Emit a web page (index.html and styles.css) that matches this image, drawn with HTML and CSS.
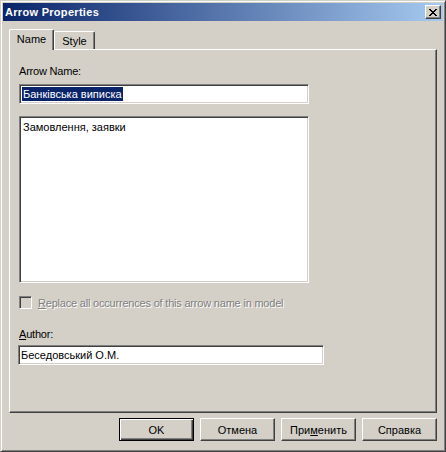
FILE: index.html
```html
<!DOCTYPE html>
<html lang="uk">
<head>
  <meta charset="UTF-8" />
  <title>Arrow Properties</title>
  <link rel="stylesheet" href="styles.css">
</head>
<body>
  <div class="window">
    <div class="titlebar">
      <span class="title">Arrow Properties</span>
      <button class="close-btn" type="button">
        <svg width="8" height="7" viewBox="0 0 8 7" shape-rendering="crispEdges">
          <path fill="#000" d="M0 0h2v1h1v1h2V1h1V0h2v1H7v1H6v1H5v1h1v1h1v1h1v1H6V6H5V5H3v1H2v1H0V6h1V5h1V4h1V3H2V2H1V1H0z"/>
        </svg>
      </button>
    </div>
    <div class="client">
      <div class="tabs">
        <div class="tab active">Name</div>
        <div class="tab">Style</div>
      </div>
      <div class="panel">
        <div class="label">Arrow Name:</div>
        <div class="field name-field"><span class="selected">Банківська виписка</span></div>
        <div class="field memo">Замовлення, заявки</div>
        <div class="check-row">
          <span class="checkbox"></span>
          <span class="check-label"><u>R</u>eplace all occurrences of this arrow name in model</span>
        </div>
        <div class="label author-label"><u>A</u>uthor:</div>
        <div class="field author-field">Беседовський О.М.</div>
      </div>
      <div class="buttons">
        <button class="btn default" type="button">OK</button>
        <button class="btn" type="button">Отмена</button>
        <button class="btn" type="button">При<u>м</u>енить</button>
        <button class="btn" type="button">Справка</button>
      </div>
    </div>
  </div>
</body>
</html>
```

FILE: styles.css
```css
* {
  box-sizing: border-box;
}
body {
  margin: 0;
  background: #d4d0c8;
  font-family: "Liberation Sans", Arial, sans-serif;
  font-size: 11px;
  color: #000;
}
.window {
  width: 446px;
  height: 452px;
  padding: 2px;
  background: #d4d0c8;
  border: 1px solid;
  border-color: #d4d0c8 #404040 #404040 #d4d0c8;
  box-shadow: inset 1px 1px #fff, inset -1px -1px #808080;
}
.titlebar {
  height: 18px;
  display: flex;
  align-items: center;
  justify-content: space-between;
  padding: 0 2px 0 2px;
  background: linear-gradient(to right, #0a246a, #a6caf0);
  color: #fff;
  font-weight: bold;
  letter-spacing: 0.3px;
}
.close-btn {
  width: 16px;
  height: 14px;
  padding: 0;
  display: flex;
  align-items: center;
  justify-content: center;
  background: #d4d0c8;
  border: 1px solid;
  border-color: #fff #404040 #404040 #fff;
  box-shadow: inset -1px -1px #808080;
}
.client {
  padding: 8px 6px 0 6px;
}
.tabs {
  height: 20px;
  display: flex;
  align-items: flex-end;
}
.tab {
  height: 18px;
  padding-top: 3px;
  line-height: 13px;
  text-align: center;
  width: 41px;
  border: 1px solid;
  border-bottom: none;
  border-color: #fff #404040 #404040 #fff;
  border-radius: 2px 2px 0 0;
  box-shadow: inset -1px 0 #808080;
}
.tab.active {
  width: 45px;
  height: 21px;
  margin-bottom: -1px;
  padding-top: 3px;
  position: relative;
  z-index: 1;
  background: #d4d0c8;
}
.panel {
  height: 364px;
  padding: 15px 0 0 9px;
  border: 1px solid;
  border-color: #fff #404040 #404040 #fff;
  box-shadow: inset -1px -1px #808080;
}
.label {
  height: 13px;
  line-height: 13px;
  letter-spacing: -0.2px;
}
.field {
  background: #fff;
  border: 1px solid;
  border-color: #808080 #fff #fff #808080;
  box-shadow: inset 1px 1px #404040, inset -1px -1px #d4d0c8;
  line-height: 14px;
}
.name-field {
  width: 290px;
  height: 20px;
  margin-top: 6px;
  padding: 2px;
}
.selected {
  display: inline-block;
  padding: 0 1px;
  background: #0a246a;
  color: #fff;
}
.memo {
  width: 290px;
  height: 167px;
  margin-top: 12px;
  padding: 3px 3px;
}
.check-row {
  display: flex;
  align-items: center;
  gap: 6px;
  height: 13px;
  margin-top: 13px;
}
.checkbox {
  width: 13px;
  height: 13px;
  background: #d4d0c8;
  border: 1px solid;
  border-color: #808080 #fff #fff #808080;
  box-shadow: inset 1px 1px #404040, inset -1px -1px #d4d0c8;
}
.check-label {
  color: #808080;
  text-shadow: 1px 1px #fff;
  letter-spacing: -0.2px;
}
.author-label {
  margin-top: 19px;
}
.author-field {
  width: 306px;
  height: 20px;
  margin: 4px 0 0 -1px;
  padding: 2px 2px;
}
.buttons {
  display: flex;
  justify-content: flex-end;
  gap: 6px;
  margin-top: 5px;
}
.btn {
  width: 75px;
  height: 23px;
  padding: 0;
  font-family: inherit;
  font-size: 11px;
  color: #000;
  background: #d4d0c8;
  border: 1px solid;
  border-color: #fff #404040 #404040 #fff;
  box-shadow: inset -1px -1px #808080;
}
.btn.default {
  border-color: #000;
  box-shadow: inset 1px 1px #fff, inset -1px -1px #404040, inset -2px -2px #808080;
}
```
